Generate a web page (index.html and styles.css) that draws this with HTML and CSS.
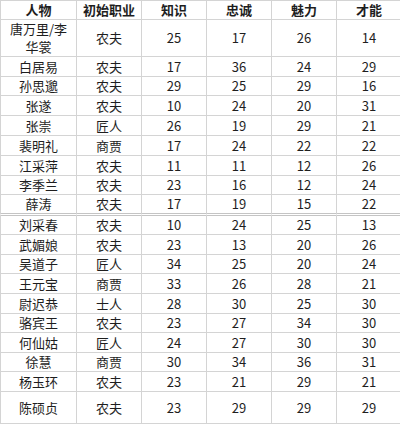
FILE: index.html
```html
<!DOCTYPE html>
<html lang="zh">
<head>
<meta charset="utf-8">
<link rel="stylesheet" href="styles.css">
</head>
<body>
<div class="sheet">
  <div class="row head h19"><div class="c">人物</div><div class="c">初始职业</div><div class="c">知识</div><div class="c">忠诚</div><div class="c">魅力</div><div class="c">才能</div></div>
  <div class="row h38"><div class="c wrap">唐万里/李华裳</div><div class="c">农夫</div><div class="c">25</div><div class="c">17</div><div class="c">26</div><div class="c">14</div></div>
  <div class="row h20"><div class="c">白居易</div><div class="c">农夫</div><div class="c">17</div><div class="c">36</div><div class="c">24</div><div class="c">29</div></div>
  <div class="row h19"><div class="c">孙思邈</div><div class="c">农夫</div><div class="c">29</div><div class="c">25</div><div class="c">29</div><div class="c">16</div></div>
  <div class="row h20"><div class="c">张遂</div><div class="c">农夫</div><div class="c">10</div><div class="c">24</div><div class="c">20</div><div class="c">31</div></div>
  <div class="row h20"><div class="c">张崇</div><div class="c">匠人</div><div class="c">26</div><div class="c">19</div><div class="c">29</div><div class="c">21</div></div>
  <div class="row h20"><div class="c">裴明礼</div><div class="c">商贾</div><div class="c">17</div><div class="c">24</div><div class="c">22</div><div class="c">22</div></div>
  <div class="row h20"><div class="c">江采萍</div><div class="c">农夫</div><div class="c">11</div><div class="c">11</div><div class="c">12</div><div class="c">26</div></div>
  <div class="row h19"><div class="c">李季兰</div><div class="c">农夫</div><div class="c">23</div><div class="c">16</div><div class="c">12</div><div class="c">24</div></div>
  <div class="row h20 split"><div class="c">薛涛</div><div class="c">农夫</div><div class="c">17</div><div class="c">19</div><div class="c">15</div><div class="c">22</div></div>
  <div class="row h20"><div class="c">刘采春</div><div class="c">农夫</div><div class="c">10</div><div class="c">24</div><div class="c">25</div><div class="c">13</div></div>
  <div class="row h20"><div class="c">武媚娘</div><div class="c">农夫</div><div class="c">23</div><div class="c">13</div><div class="c">20</div><div class="c">26</div></div>
  <div class="row h19"><div class="c">吴道子</div><div class="c">匠人</div><div class="c">34</div><div class="c">25</div><div class="c">20</div><div class="c">24</div></div>
  <div class="row h20"><div class="c">王元宝</div><div class="c">商贾</div><div class="c">33</div><div class="c">26</div><div class="c">28</div><div class="c">21</div></div>
  <div class="row h20"><div class="c">尉迟恭</div><div class="c">士人</div><div class="c">28</div><div class="c">30</div><div class="c">25</div><div class="c">30</div></div>
  <div class="row h19"><div class="c">骆宾王</div><div class="c">农夫</div><div class="c">23</div><div class="c">27</div><div class="c">34</div><div class="c">30</div></div>
  <div class="row h20"><div class="c">何仙姑</div><div class="c">匠人</div><div class="c">24</div><div class="c">27</div><div class="c">30</div><div class="c">30</div></div>
  <div class="row h19"><div class="c">徐慧</div><div class="c">商贾</div><div class="c">30</div><div class="c">34</div><div class="c">36</div><div class="c">31</div></div>
  <div class="row h20"><div class="c">杨玉环</div><div class="c">农夫</div><div class="c">23</div><div class="c">21</div><div class="c">29</div><div class="c">21</div></div>
  <div class="row h32"><div class="c">陈硕贞</div><div class="c">农夫</div><div class="c">23</div><div class="c">29</div><div class="c">29</div><div class="c">29</div></div>
</div>
</body>
</html>
```

FILE: styles.css
```css
html, body {
  margin: 0;
  padding: 0;
  background: #ffffff;
  overflow: hidden;
}
.sheet {
  width: 402px;
  font-family: "Noto Sans CJK SC", "Noto Sans", sans-serif;
  font-size: 13px;
  color: #1e1e1e;
}
.row {
  display: grid;
  grid-template-columns: 77px repeat(5, 65px);
  box-sizing: border-box;
}
.c {
  display: flex;
  align-items: center;
  justify-content: center;
  text-align: center;
  box-sizing: border-box;
  border-right: 1px solid #d4d4d4;
  border-bottom: 1px solid #d4d4d4;
  line-height: 18px;
  padding: 0 4px;
}
.c:first-child {
  border-left: 1px solid #d4d4d4;
}
.head .c {
  font-weight: bold;
  border-top: 1px solid #d4d4d4;
}
.head { height: 19px; }
.h19 { height: 19px; }
.h20 { height: 20px; }
.h32 { height: 32px; }
.h38 { height: 38px; }
.head.h19 { height: 19px; }
.split .c {
  border-bottom: 3px double #c4c4c4;
}
.wrap {
  word-break: break-all;
}
```
